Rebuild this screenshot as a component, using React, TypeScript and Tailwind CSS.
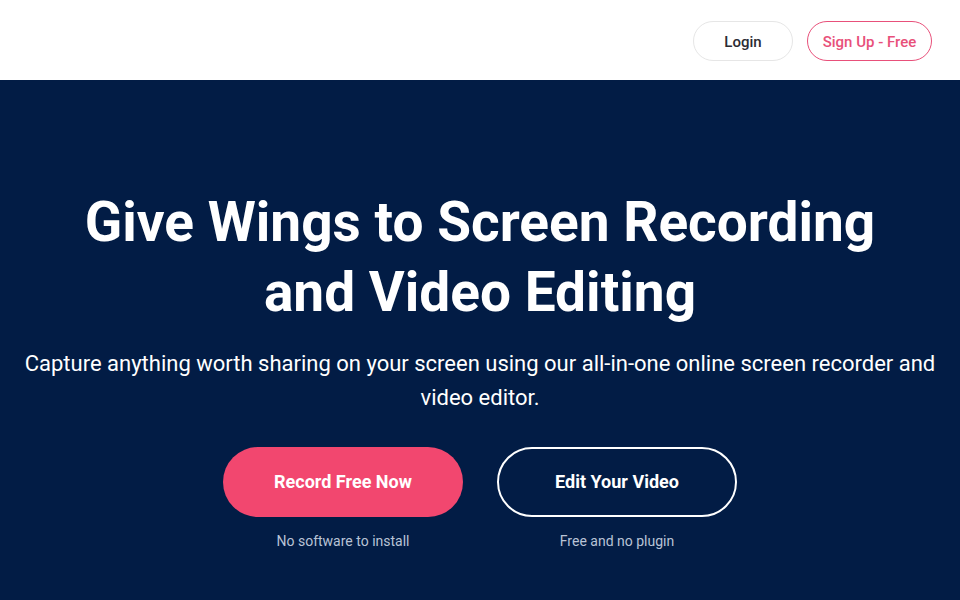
import React from "react";

export default function App() {
  return (
    <div className="w-[960px] h-[600px] overflow-hidden flex flex-col font-['Roboto',sans-serif]">
      <header className="h-[80px] bg-white flex items-start pt-[21px] justify-end pr-[28px] gap-[14px] shrink-0">
        <button className="w-[100px] h-[40px] pt-[2px] rounded-full border border-[#e6e6e6] text-[15px] font-medium text-[#2b2b33]">
          Login
        </button>
        <button className="w-[125px] h-[40px] pt-[2px] rounded-full border border-[#e8507a] text-[15px] font-medium text-[#e8507a]">
          Sign Up - Free
        </button>
      </header>
      <main className="flex-1 bg-[#021c45] flex flex-col items-center text-center">
        <h1 className="mt-[107px] text-[55px] leading-[70px] font-bold text-white">
          Give Wings to Screen Recording
          <br />
          and Video Editing
        </h1>
        <p className="mt-[20px] text-[22px] leading-[34px] text-white px-[20px]">
          Capture anything worth sharing on your screen using our all-in-one online screen recorder and
          <br />
          video editor.
        </p>
        <div className="mt-[32px] flex gap-[34px]">
          <div className="flex flex-col items-center">
            <button className="w-[240px] h-[70px] pb-[2px] rounded-full bg-[#f2476f] text-white text-[18px] font-bold">
              Record Free Now
            </button>
            <span className="mt-[15px] text-[14px] leading-[18px] text-[#b9c3d6]">No software to install</span>
          </div>
          <div className="flex flex-col items-center">
            <button className="w-[240px] h-[70px] pb-[2px] rounded-full border-2 border-white text-white text-[18px] font-bold">
              Edit Your Video
            </button>
            <span className="mt-[15px] text-[14px] leading-[18px] text-[#b9c3d6]">Free and no plugin</span>
          </div>
        </div>
      </main>
    </div>
  );
}
